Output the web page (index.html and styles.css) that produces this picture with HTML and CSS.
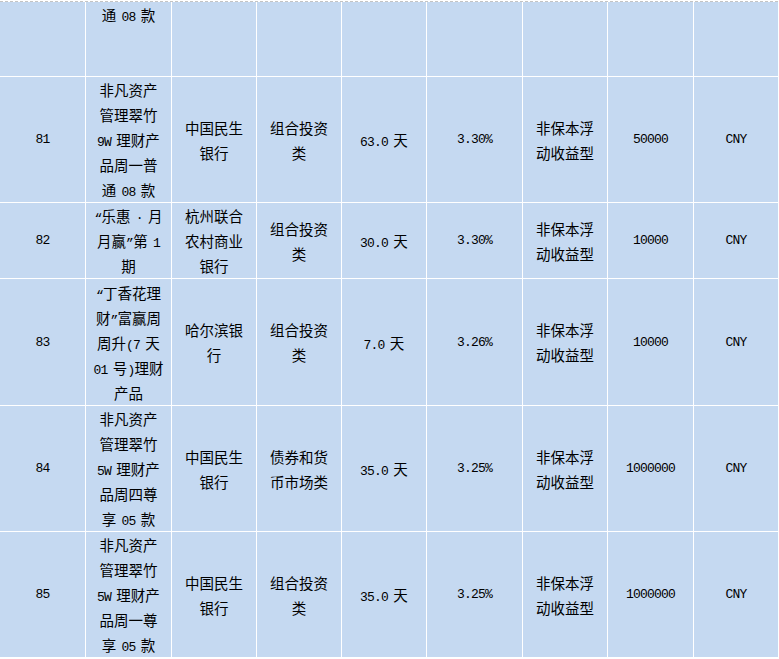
FILE: index.html
```html
<!DOCTYPE html>
<html lang="zh-CN">
<head>
<meta charset="utf-8">
<title>理财产品列表</title>
<link rel="stylesheet" href="styles.css">
</head>
<body>
<div class="sheet">
  <div class="pagebreak"></div>
  <div class="grid">
    <!-- row 80 (tail) -->
    <div class="c"></div>
    <div class="c top"><p class="t">通 <span class="n">08</span> 款</p></div>
    <div class="c"></div><div class="c"></div><div class="c"></div><div class="c"></div><div class="c"></div><div class="c"></div><div class="c"></div>

    <!-- row 81 -->
    <div class="c"><p class="t n">81</p></div>
    <div class="c"><p class="t">非凡资产<br>管理翠竹<br><span class="n">9W</span> 理财产<br>品周一普<br>通 <span class="n">08</span> 款</p></div>
    <div class="c"><p class="t">中国民生<br>银行</p></div>
    <div class="c"><p class="t">组合投资<br>类</p></div>
    <div class="c"><p class="t"><span class="n">63.0</span> 天</p></div>
    <div class="c"><p class="t n">3.30%</p></div>
    <div class="c"><p class="t">非保本浮<br>动收益型</p></div>
    <div class="c"><p class="t n">50000</p></div>
    <div class="c"><p class="t n">CNY</p></div>

    <!-- row 82 -->
    <div class="c"><p class="t n">82</p></div>
    <div class="c"><p class="t"><span class="n">“</span>乐惠 <span class="n">·</span> 月<br>月赢<span class="n">”</span>第 <span class="n">1</span><br>期</p></div>
    <div class="c"><p class="t">杭州联合<br>农村商业<br>银行</p></div>
    <div class="c"><p class="t">组合投资<br>类</p></div>
    <div class="c"><p class="t"><span class="n">30.0</span> 天</p></div>
    <div class="c"><p class="t n">3.30%</p></div>
    <div class="c"><p class="t">非保本浮<br>动收益型</p></div>
    <div class="c"><p class="t n">10000</p></div>
    <div class="c"><p class="t n">CNY</p></div>

    <!-- row 83 -->
    <div class="c"><p class="t n">83</p></div>
    <div class="c"><p class="t"><span class="n">“</span>丁香花理<br>财<span class="n">”</span>富赢周<br>周升<span class="n">(7</span> 天<br><span class="n">01</span> 号<span class="n">)</span>理财<br>产品</p></div>
    <div class="c"><p class="t">哈尔滨银<br>行</p></div>
    <div class="c"><p class="t">组合投资<br>类</p></div>
    <div class="c"><p class="t"><span class="n">7.0</span> 天</p></div>
    <div class="c"><p class="t n">3.26%</p></div>
    <div class="c"><p class="t">非保本浮<br>动收益型</p></div>
    <div class="c"><p class="t n">10000</p></div>
    <div class="c"><p class="t n">CNY</p></div>

    <!-- row 84 -->
    <div class="c"><p class="t n">84</p></div>
    <div class="c"><p class="t">非凡资产<br>管理翠竹<br><span class="n">5W</span> 理财产<br>品周四尊<br>享 <span class="n">05</span> 款</p></div>
    <div class="c"><p class="t">中国民生<br>银行</p></div>
    <div class="c"><p class="t">债券和货<br>币市场类</p></div>
    <div class="c"><p class="t"><span class="n">35.0</span> 天</p></div>
    <div class="c"><p class="t n">3.25%</p></div>
    <div class="c"><p class="t">非保本浮<br>动收益型</p></div>
    <div class="c"><p class="t n">1000000</p></div>
    <div class="c"><p class="t n">CNY</p></div>

    <!-- row 85 -->
    <div class="c"><p class="t n">85</p></div>
    <div class="c"><p class="t">非凡资产<br>管理翠竹<br><span class="n">5W</span> 理财产<br>品周一尊<br>享 <span class="n">05</span> 款</p></div>
    <div class="c"><p class="t">中国民生<br>银行</p></div>
    <div class="c"><p class="t">组合投资<br>类</p></div>
    <div class="c"><p class="t"><span class="n">35.0</span> 天</p></div>
    <div class="c"><p class="t n">3.25%</p></div>
    <div class="c"><p class="t">非保本浮<br>动收益型</p></div>
    <div class="c"><p class="t n">1000000</p></div>
    <div class="c"><p class="t n">CNY</p></div>
  </div>
</div>
</body>
</html>
```

FILE: styles.css
```css
html, body {
  margin: 0;
  padding: 0;
  background: #ffffff;
}

.sheet {
  width: 779px;
  font-family: "Noto Sans CJK SC", sans-serif;
  font-size: 14.5px;
  color: #000000;
}

.pagebreak {
  height: 1px;
  margin-top: 1px;
  background: repeating-linear-gradient(90deg, #c4c4c4 0 3px, transparent 3px 5px);
}

.grid {
  display: grid;
  grid-template-columns: 86px 86px 85px 85px 85px 96px 85px 86px 85px;
  grid-template-rows: 75px 126px 76px 127px 126px 126px;
}

.c {
  box-sizing: border-box;
  display: flex;
  align-items: center;
  justify-content: center;
  background: #c5d9f1;
  border-right: 1px solid #ffffff;
  border-bottom: 1px solid #ffffff;
  overflow: hidden;
}

.c.top {
  align-items: flex-start;
}

.t {
  margin: 0;
  text-align: center;
  line-height: 25px;
  white-space: nowrap;
  word-spacing: 2px;
}

.n {
  font-family: "Liberation Mono", monospace;
  font-size: 13px;
  letter-spacing: -0.8px;
}

.t .n {
  line-height: 0;
}
```
